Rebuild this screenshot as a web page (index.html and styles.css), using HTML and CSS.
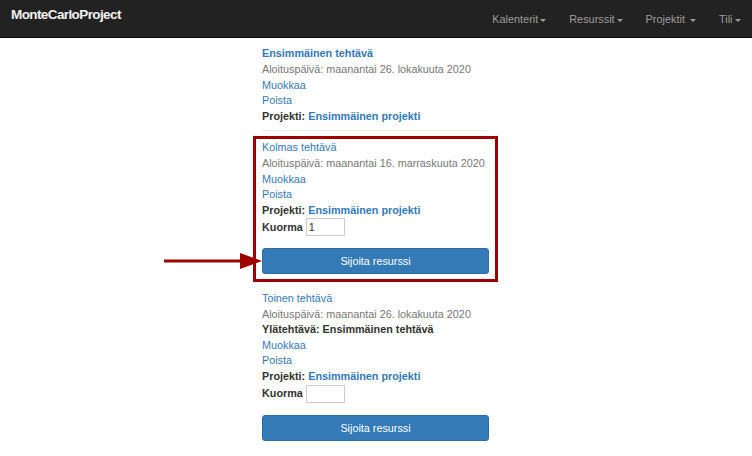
FILE: index.html
```html
<!DOCTYPE html>
<html lang="fi">
<head>
    <meta charset="UTF-8">
    <meta name="viewport" content="width=device-width, initial-scale=1.0">
    <title>MonteCarloProject</title>
    <link rel="stylesheet" href="styles.css">
</head>
<body>
    <nav class="navbar">
        <a class="brand" href="#">MonteCarloProject</a>
        <ul class="nav-links">
            <li><a href="#">Kalenterit<span class="caret"></span></a></li>
            <li><a href="#">Resurssit<span class="caret"></span></a></li>
            <li><a href="#">Projektit <span class="caret"></span></a></li>
            <li><a href="#">Tili<span class="caret"></span></a></li>
        </ul>
    </nav>

    <div class="tasks">
        <div class="task">
            <a class="task-title strong" href="#">Ensimmäinen tehtävä</a>
            <div class="muted">Aloituspäivä: maanantai 26. lokakuuta 2020</div>
            <a href="#">Muokkaa</a>
            <a href="#">Poista</a>
            <div><b>Projekti:</b> <a class="strong inline" href="#">Ensimmäinen projekti</a></div>
        </div>
        <hr class="divider">

        <div class="task highlight">
            <a class="task-title" href="#">Kolmas tehtävä</a>
            <div class="muted">Aloituspäivä: maanantai 16. marraskuuta 2020</div>
            <a href="#">Muokkaa</a>
            <a href="#">Poista</a>
            <div><b>Projekti:</b> <a class="strong inline" href="#">Ensimmäinen projekti</a></div>
            <div class="load-row">
                <b>Kuorma</b>
                <input class="load-input" type="text" value="1">
            </div>
            <button class="btn-primary">Sijoita resurssi</button>
            <svg class="arrow" width="98" height="16" viewBox="0 0 98 16">
                <line x1="0" y1="8" x2="78" y2="8" stroke="#9e0000" stroke-width="3"/>
                <polygon points="76,0 98,8 76,16" fill="#9e0000"/>
            </svg>
        </div>

        <div class="task after-highlight">
            <a class="task-title" href="#">Toinen tehtävä</a>
            <div class="muted">Aloituspäivä: maanantai 26. lokakuuta 2020</div>
            <div><b>Ylätehtävä: Ensimmäinen tehtävä</b></div>
            <a href="#">Muokkaa</a>
            <a href="#">Poista</a>
            <div><b>Projekti:</b> <a class="strong inline" href="#">Ensimmäinen projekti</a></div>
            <div class="load-row">
                <b>Kuorma</b>
                <input class="load-input" type="text" value="">
            </div>
            <button class="btn-primary">Sijoita resurssi</button>
        </div>
    </div>
</body>
</html>
```

FILE: styles.css
```css
body {
    margin: 0;
    font-family: "Liberation Sans", Arial, sans-serif;
    font-size: 10.8px;
    line-height: 15.6px;
    color: #333;
    background-color: #fff;
}

a {
    color: #337ab7;
    text-decoration: none;
}

/* navbar */
.navbar {
    display: flex;
    justify-content: space-between;
    align-items: center;
    height: 37px;
    background-color: #222;
    border-bottom: 1px solid #080808;
}

.brand {
    padding-left: 11px;
    margin-top: -8px;
    color: #f2f2f2;
    font-weight: bold;
    font-size: 13.5px;
    letter-spacing: -0.6px;
}

.nav-links {
    display: flex;
    margin: 0;
    padding: 0;
    list-style: none;
}

.nav-links a {
    display: block;
    padding: 3px 11.5px 0;
    color: #9d9d9d;
    font-size: 10.9px;
}

.caret {
    display: inline-block;
    width: 0;
    height: 0;
    margin-left: 2px;
    vertical-align: middle;
    border-top: 3px solid;
    border-left: 3px solid transparent;
    border-right: 3px solid transparent;
}

/* task list */
.tasks {
    width: 227px;
    margin-left: calc(50% - 114px);
    padding-top: 8.4px;
}

.task {
    display: flex;
    flex-direction: column;
    align-items: flex-start;
}

.strong {
    font-weight: bold;
}

.muted {
    color: #777;
    white-space: nowrap;
}

.divider {
    margin: 6px 0 4.6px;
    border: 0;
    border-top: 1px solid #eee;
}

.highlight {
    position: relative;
    margin: 0 -9px;
    padding: 1.4px 6px 5px;
    border: 3px solid #9e0000;
}

.after-highlight {
    margin-top: 8.7px;
}

.load-row {
    display: flex;
    align-items: center;
    gap: 3px;
    height: 18px;
}

.load-input {
    box-sizing: border-box;
    width: 39px;
    height: 18px;
    margin: 0;
    padding: 0 2px;
    border: 1px solid #ccc;
    font-family: inherit;
    font-size: 10.8px;
    color: #333;
}

.btn-primary {
    align-self: stretch;
    height: 26px;
    margin-top: 12px;
    padding: 0;
    border: 1px solid #2e6da4;
    border-radius: 3px;
    background-color: #337ab7;
    color: #fff;
    font-family: inherit;
    font-size: 10.8px;
    cursor: pointer;
}

.arrow {
    position: absolute;
    left: -92px;
    top: 114px;
}
```
